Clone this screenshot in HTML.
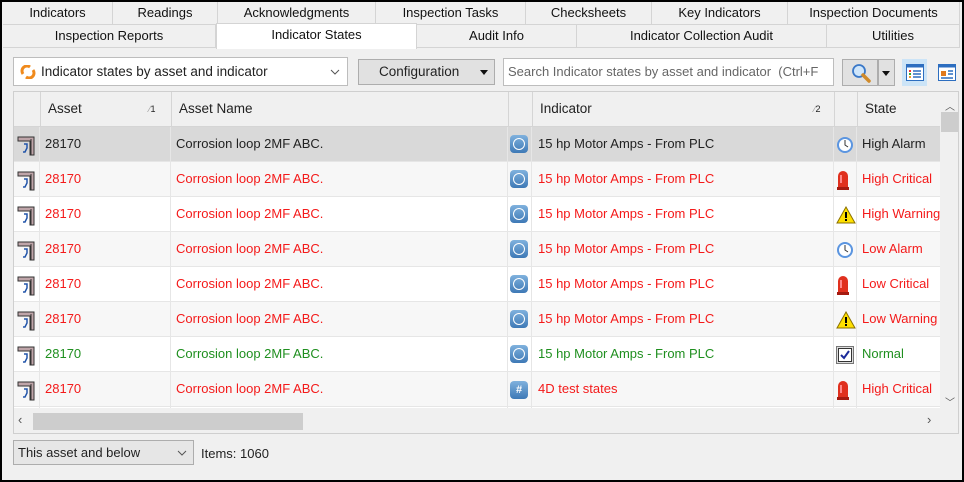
<!DOCTYPE html>
<html><head><meta charset="utf-8"><style>
*{box-sizing:border-box;margin:0;padding:0}
body{width:964px;height:482px;background:#000;font-family:"Liberation Sans",Tahoma,sans-serif;font-size:13px;color:#222;position:relative;overflow:hidden}
#w{position:absolute;left:2px;top:2px;width:960px;height:478px;background:#f0f0f0}
.a{position:absolute}
.tab{position:absolute;height:23px;border-right:1px solid #d4d4d4;border-bottom:1px solid #d4d4d4;background:#f0f0f0;text-align:center;line-height:22px;font-size:13px;color:#111}
.sel{background:#fff;border:1px solid #d4d4d4;border-bottom:none}
.row{position:absolute;left:13px;width:927px;height:35px;border-bottom:1px solid #e6e6e6}
.row div{position:absolute;top:0;height:34px;line-height:34px;border-right:1px solid #e6e6e6;white-space:nowrap;overflow:hidden}
.red{color:#f41a1a}.grn{color:#1f8f1f}
.ai{display:inline-block;width:18px;height:18px;border-radius:4px;background:linear-gradient(#7fb1dd,#3e79b6);vertical-align:middle;position:relative;top:-1px}
.ai:after{content:"";position:absolute;left:3px;top:3px;width:10px;height:10px;border:1.5px solid #fff;border-radius:50%}
.hs{display:inline-block;width:18px;height:18px;border-radius:4px;background:linear-gradient(#7fb1dd,#3e79b6);color:#fff;font-size:11px;line-height:18px;text-align:center;font-weight:bold;vertical-align:middle}
</style></head><body><div id="w">
<div class="tab" style="left:1px;top:0;width:110px">Indicators</div>
<div class="tab" style="left:111px;top:0;width:105px">Readings</div>
<div class="tab" style="left:216px;top:0;width:158px">Acknowledgments</div>
<div class="tab" style="left:374px;top:0;width:150px">Inspection Tasks</div>
<div class="tab" style="left:524px;top:0;width:126px">Checksheets</div>
<div class="tab" style="left:650px;top:0;width:136px">Key Indicators</div>
<div class="tab" style="left:786px;top:0;width:172px">Inspection Documents</div>
<div class="tab" style="left:1px;top:23px;width:213px">Inspection Reports</div>
<div class="tab sel" style="left:214px;top:21px;width:201px;height:26px;line-height:22px">Indicator States</div>
<div class="tab" style="left:415px;top:23px;width:160px">Audit Info</div>
<div class="tab" style="left:575px;top:23px;width:250px">Indicator Collection Audit</div>
<div class="tab" style="left:825px;top:23px;width:133px">Utilities</div>
<div class="a" style="left:11px;top:55px;width:335px;height:29px;background:#fff;border:1px solid #bdbdbd;line-height:27px;padding-left:27px;font-size:13.5px">Indicator states by asset and indicator
<svg class="a" style="left:6px;top:7px" width="16" height="14"><path d="M3 9a5 5 0 0 1 7-7" stroke="#f08a1c" stroke-width="3" fill="none"/><path d="M13 5a5 5 0 0 1-7 7" stroke="#f08a1c" stroke-width="3" fill="none"/></svg>
<svg class="a" style="left:316px;top:11px" width="10" height="6"><path d="M1 1l4 4 4-4" stroke="#555" fill="none"/></svg></div>
<div class="a" style="left:356px;top:57px;width:137px;height:26px;background:#e1e1e1;border:1px solid #adadad;line-height:24px;padding-left:20px;font-size:13.5px">Configuration<span class="a" style="right:6px;top:10px;border:4px solid transparent;border-top:5px solid #111"></span></div>
<div class="a" style="left:501px;top:56px;width:331px;height:28px;background:#fff;border:1px solid #bdbdbd;line-height:26px;padding-left:4px;color:#666;font-size:13px;white-space:nowrap;overflow:hidden">Search Indicator states by asset and indicator&nbsp; (Ctrl+F</div>
<div class="a" style="left:840px;top:57px;width:36px;height:27px;background:#e1e1e1;border:1px solid #adadad">
<svg class="a" style="left:8px;top:3px" width="22" height="20"><circle cx="8" cy="8" r="6" fill="#cfe6fb" stroke="#3a78c8" stroke-width="1.8"/><path d="M12 12l6 6" stroke="#d08a2a" stroke-width="3.5" stroke-linecap="round"/></svg></div>
<div class="a" style="left:876px;top:57px;width:17px;height:27px;background:#e1e1e1;border:1px solid #adadad"><span class="a" style="left:3px;top:11px;border:4px solid transparent;border-top:5px solid #111"></span></div>
<div class="a" style="left:900px;top:57px;width:25px;height:27px;background:#cce4f7"></div>
<svg class="a" style="left:904px;top:62px" width="18" height="17"><rect x="0.5" y="0.5" width="17" height="16" fill="#fff" stroke="#2d6ec0"/><rect x="0.5" y="0.5" width="17" height="3" fill="#2d6ec0"/><rect x="3" y="6" width="2" height="2" fill="#e33"/><rect x="3" y="9" width="2" height="2" fill="#3a3"/><rect x="3" y="12" width="2" height="2" fill="#e93"/><path d="M7 7h8M7 10h8M7 13h8" stroke="#2d6ec0" stroke-width="1.5"/></svg>
<svg class="a" style="left:936px;top:62px" width="18" height="17"><rect x="0.5" y="0.5" width="17" height="16" fill="#fff" stroke="#2d6ec0"/><rect x="0.5" y="0.5" width="17" height="3" fill="#2d6ec0"/><rect x="3" y="7" width="5" height="5" fill="#e0791d"/><path d="M10 7h5M10 10h5M3 14h12" stroke="#2d6ec0" stroke-width="1.5"/></svg>
<div class="a" style="left:11px;top:89px;width:946px;height:343px;border:1px solid #cfcfcf;background:#fff"></div>
<div class="a" style="left:12px;top:90px;width:926px;height:35px;background:#f0f0f0;border-bottom:1px solid #d5d5d5"></div>
<div class="a" style="left:38px;top:90px;width:1px;height:35px;background:#d5d5d5"></div>
<div class="a" style="left:169px;top:90px;width:1px;height:35px;background:#d5d5d5"></div>
<div class="a" style="left:506px;top:90px;width:1px;height:35px;background:#d5d5d5"></div>
<div class="a" style="left:530px;top:90px;width:1px;height:35px;background:#d5d5d5"></div>
<div class="a" style="left:832px;top:90px;width:1px;height:35px;background:#d5d5d5"></div>
<div class="a" style="left:855px;top:90px;width:1px;height:35px;background:#d5d5d5"></div>
<div class="a" style="left:46px;top:99px;font-size:13.5px">Asset</div>
<div class="a" style="left:147px;top:102px;font-size:9px;color:#999">⁄<span style="color:#222;font-size:9px">1</span></div>
<div class="a" style="left:177px;top:99px;font-size:13.5px">Asset Name</div>
<div class="a" style="left:538px;top:99px;font-size:13.5px">Indicator</div>
<div class="a" style="left:812px;top:102px;font-size:9px;color:#999">⁄<span style="color:#222;font-size:9px">2</span></div>
<div class="a" style="left:863px;top:99px;font-size:13.5px">State</div>
<div id="rows"></div>
<div class="a" style="left:938px;top:90px;width:18px;height:316px;background:#f0f0f0"></div>
<div class="a" style="left:939px;top:110px;width:17px;height:20px;background:#cdcdcd"></div>
<div class="a" style="left:943px;top:96px;font-size:10px;color:#555">︿</div>
<div class="a" style="left:943px;top:392px;font-size:10px;color:#555">﹀</div>
<div class="a" style="left:12px;top:406px;width:944px;height:25px;background:#f0f0f0"></div>
<div class="a" style="left:31px;top:411px;width:270px;height:17px;background:#cdcdcd"></div>
<div class="a" style="left:16px;top:410px;font-size:13px;color:#555">‹</div>
<div class="a" style="left:925px;top:410px;font-size:13px;color:#555">›</div>
<div class="a" style="left:11px;top:438px;width:181px;height:25px;background:#e6e6e6;border:1px solid #adadad;line-height:23px;padding-left:4px;font-size:13px">This asset and below
<svg class="a" style="left:163px;top:9px" width="10" height="6"><path d="M1 1l4 4 4-4" stroke="#555" fill="none"/></svg></div>
<div class="a" style="left:199px;top:444px;font-size:13px">Items: 1060</div>
</div>
<script>
(function(){
var d=[["","High Alarm","clk","ai","15 hp Motor Amps - From PLC"],["red","High Critical","crit","ai","15 hp Motor Amps - From PLC"],["red","High Warning","warn","ai","15 hp Motor Amps - From PLC"],["red","Low Alarm","clk","ai","15 hp Motor Amps - From PLC"],["red","Low Critical","crit","ai","15 hp Motor Amps - From PLC"],["red","Low Warning","warn","ai","15 hp Motor Amps - From PLC"],["grn","Normal","ok","ai","15 hp Motor Amps - From PLC"],["red","High Critical","crit","hs","4D test states"],["","","","",""]];
var ic={clk:'<svg width="18" height="18" style="vertical-align:middle"><circle cx="9" cy="9" r="8" fill="#5b95e0"/><circle cx="9" cy="9" r="6" fill="#fff"/><path d="M9 4v5l3 2" stroke="#333" fill="none"/></svg>',
crit:'<svg width="14" height="20" style="vertical-align:middle"><path d="M2 18V6a5 5 0 0 1 10 0v12z" fill="#e0301e"/><rect x="1" y="17" width="12" height="3" fill="#a51a10"/><rect x="4" y="5" width="2" height="8" fill="#f88"/></svg>',
warn:'<svg width="20" height="18" style="vertical-align:middle"><path d="M10 1L19 17H1z" fill="#ffe000" stroke="#8a7000"/><rect x="9" y="6" width="2" height="6" fill="#000"/><rect x="9" y="13" width="2" height="2" fill="#000"/></svg>',
ok:'<svg width="18" height="18" style="vertical-align:middle"><rect x="0.5" y="0.5" width="17" height="17" fill="#ddd" stroke="#777"/><rect x="2.5" y="2.5" width="13" height="13" fill="#fff" stroke="#333"/><path d="M5 9l3 3 5-7" stroke="#1a2a9a" stroke-width="2" fill="none"/></svg>'};
var as='<svg width="22" height="22" style="vertical-align:middle"><path d="M2 3h16v18h-4V7H2z" fill="#bfa5a9" stroke="#333"/><path d="M15 5v16" stroke="#333"/><path d="M8 10h3v4l-2 4H7" stroke="#2255aa" stroke-width="1.5" fill="none"/></svg>';
var h='';
for(var i=0;i<d.length;i++){var r=d[i],ty=125+35*i,bg=i==0?'#d9d9d9':(i%2?'#f7f7f7':'#fff');
if(i==8){h+='<div class="row" style="left:12px;top:'+ty+'px;background:#fff;height:10px"><div style="left:0;width:26px;height:10px"></div><div style="left:26px;width:131px;height:10px"></div><div style="left:157px;width:337px;height:10px"></div><div style="left:494px;width:24px;height:10px"></div><div style="left:518px;width:302px;height:10px"></div><div style="left:820px;width:23px;height:10px"></div></div>';continue;}
h+='<div class="row '+r[0]+'" style="left:12px;top:'+ty+'px;background:'+bg+'">'+
'<div style="left:0;width:26px;padding-left:2px">'+as+'</div>'+
'<div style="left:26px;width:131px;padding-left:5px">28170</div>'+
'<div style="left:157px;width:337px;padding-left:5px">Corrosion loop 2MF ABC.</div>'+
'<div style="left:494px;width:24px;padding-left:2px">'+(r[3]=='ai'?'<span class="ai"></span>':'<span class="hs">#</span>')+'</div>'+
'<div style="left:518px;width:302px;padding-left:6px">'+r[4]+'</div>'+
'<div style="left:820px;width:23px;padding-left:2px">'+ic[r[2]]+'</div>'+
'<div style="left:843px;width:83px;padding-left:5px;border:none">'+r[1]+'</div></div>';}
document.getElementById('rows').innerHTML=h;
})();
</script>
</body></html>
